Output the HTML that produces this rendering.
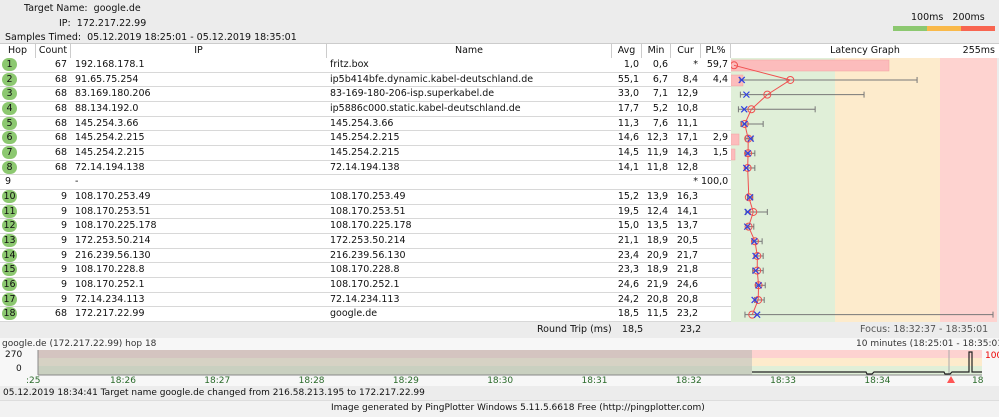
<!DOCTYPE html><html><head><style>
body{margin:0;width:999px;height:416px;background:#ececec;font-family:"DejaVu Sans","Liberation Sans",sans-serif;font-size:9.5px;color:#111;position:relative;overflow:hidden}
.a{position:absolute;white-space:nowrap}
.r{position:absolute;left:0;width:731px;height:14.67px;background:#fff;border-bottom:1px solid #d8d8d8;box-sizing:border-box}
.r div{position:absolute;top:1px;line-height:12px}
.h{position:absolute;top:44px;height:14px;background:#fff;border-right:1px solid #ccc;box-sizing:border-box;text-align:center;line-height:13px}
.b{background:#8cc870;border-radius:7px;min-width:13px;padding:0 1px;height:13px;top:0!important;line-height:13px!important;text-align:center;left:2px}
.rt{text-align:right}
</style></head><body>
<div class="a" style="left:24px;top:3px">Target Name:&nbsp; google.de</div>
<div class="a" style="left:59px;top:18px">IP:&nbsp; 172.217.22.99</div>
<div class="a" style="left:5px;top:32px">Samples Timed:&nbsp; 05.12.2019 18:25:01 - 05.12.2019 18:35:01</div>
<div class="a" style="left:911px;top:12px">100ms&nbsp;&nbsp; 200ms</div>
<div class="a" style="left:893px;top:26px;width:34px;height:5px;background:#8cc870"></div>
<div class="a" style="left:927px;top:26px;width:34px;height:5px;background:#f9b94a"></div>
<div class="a" style="left:961px;top:26px;width:34px;height:5px;background:#f86550"></div>
<div class="a" style="left:0;top:43px;width:999px;height:1px;background:#ccc"></div>
<div class="h" style="left:0;width:36px">Hop</div>
<div class="h" style="left:36px;width:35px">Count</div>
<div class="h" style="left:71px;width:256px">IP</div>
<div class="h" style="left:327px;width:285px">Name</div>
<div class="h" style="left:612px;width:30px">Avg</div>
<div class="h" style="left:642px;width:29px">Min</div>
<div class="h" style="left:671px;width:30px">Cur</div>
<div class="h" style="left:701px;width:30px">PL%</div>
<div class="h" style="left:731px;width:268px;border:0">Latency Graph<span style="position:absolute;right:4px">255ms</span></div>
<div id="rows"></div>
<svg class="a" style="left:731px;top:58px" width="268" height="264">
<rect x="0" y="0" width="104" height="264" fill="#e0efd8"/><rect x="104" y="0" width="105" height="264" fill="#fdebcc"/><rect x="209" y="0" width="57" height="264" fill="#fed3d0"/>
<g fill="#fcbcbc" stroke="#f4a0a0" stroke-width=".5"><rect x="0" y="2" width="158" height="11"/><rect x="0" y="17" width="12" height="11"/><rect x="0" y="76" width="8" height="11"/><rect x="0" y="91" width="4" height="11"/></g>
<g stroke="#777" stroke-width="1" id="eb"></g>
<polyline id="pl" fill="none" stroke="#f05050" stroke-width="1"/>
<g id="mk"></g>
</svg>
<div class="a" style="left:0;top:322px;width:999px;height:15px;background:#ececec"></div>
<div class="a" style="left:537px;top:324px">Round Trip (ms)</div>
<div class="a" style="left:622px;top:324px">18,5</div>
<div class="a" style="left:680px;top:324px">23,2</div>
<div class="a" style="left:860px;top:324px;color:#555">Focus: 18:32:37 - 18:35:01</div>
<div class="a" style="left:0;top:338px;width:999px;height:48px;background:#f7f7f7"></div>
<div class="a" style="left:2px;top:339px;font-size:9px;color:#333">google.de (172.217.22.99) hop 18</div>
<div class="a" style="left:856px;top:339px;font-size:9px;color:#333">10 minutes (18:25:01 - 18:35:01)</div>
<div class="a" style="left:5px;top:350px;font-size:9px">270</div><div class="a" style="left:16px;top:364px;font-size:9px">0</div>
<div class="a" style="left:985px;top:351px;font-size:9px;color:#e00">100</div>
<svg class="a" style="left:24px;top:350px" width="960" height="36">
<rect x="14" y="0" width="714" height="8" fill="#d4c4c0"/><rect x="14" y="8" width="714" height="8" fill="#d6d2c4"/><rect x="14" y="16" width="714" height="9" fill="#c9d0c0"/>
<rect x="728" y="0" width="230" height="8" fill="#fdd2d0"/><rect x="728" y="8" width="230" height="8" fill="#fdebcc"/><rect x="728" y="16" width="230" height="9" fill="#e0efd8"/>
<line x1="14" y1="0" x2="14" y2="25" stroke="#888"/><line x1="14" y1="25" x2="958" y2="25" stroke="#888"/>
<line x1="925" y1="0" x2="925" y2="25" stroke="#aaa"/>
<polyline points="728,22 842,22 843,24 848,24 850,22 920,22 921,24 926,24 928,22 940,22 942,22 945,22 945,2 948,2 948,22 958,22" fill="none" stroke="#222" stroke-width="1.2"/>
<polygon points="923,33 927,26 931,33" fill="#f55"/>
</svg>
<div class="a" style="left:26px;top:376px;font-size:9px;color:#2a6a2a;word-spacing:0">:25</div>
<div id="ax"></div>
<div class="a" style="left:0;top:386px;width:999px;height:14px;background:#ececec"></div>
<div class="a" style="left:3px;top:388px;font-size:9px">05.12.2019 18:34:41 Target name google.de changed from 216.58.213.195 to 172.217.22.99</div>
<div class="a" style="left:0;top:400px;width:999px;height:16px;background:#f2f2f2;border-top:1px solid #ddd"></div>
<div class="a" style="left:331px;top:403px;font-size:9px">Image generated by PingPlotter Windows 5.11.5.6618 Free (http://pingplotter.com)</div>
<script>
var D=[[1,67,"192.168.178.1","fritz.box","1,0","0,6","*","59,7",1,.6,null,null],
[2,68,"91.65.75.254","ip5b414bfe.dynamic.kabel-deutschland.de","55,1","6,7","8,4","4,4",55.1,6.7,8.4,177],
[3,68,"83.169.180.206","83-169-180-206-isp.superkabel.de","33,0","7,1","12,9","",33,7.1,12.9,126],
[4,68,"88.134.192.0","ip5886c000.static.kabel-deutschland.de","17,7","5,2","10,8","",17.7,5.2,10.8,79],
[5,68,"145.254.3.66","145.254.3.66","11,3","7,6","11,1","",11.3,7.6,11.1,29],
[6,68,"145.254.2.215","145.254.2.215","14,6","12,3","17,1","2,9",14.6,12.3,17.1,19],
[7,68,"145.254.2.215","145.254.2.215","14,5","11,9","14,3","1,5",14.5,11.9,14.3,21],
[8,68,"72.14.194.138","72.14.194.138","14,1","11,8","12,8","",14.1,11.8,12.8,21],
[9,"","-","","","","*","100,0",null],
[10,9,"108.170.253.49","108.170.253.49","15,2","13,9","16,3","",15.2,13.9,16.3,19],
[11,9,"108.170.253.51","108.170.253.51","19,5","12,4","14,1","",19.5,12.4,14.1,33],
[12,9,"108.170.225.178","108.170.225.178","15,0","13,5","13,7","",15,13.5,13.7,20],
[13,9,"172.253.50.214","172.253.50.214","21,1","18,9","20,5","",21.1,18.9,20.5,28],
[14,9,"216.239.56.130","216.239.56.130","23,4","20,9","21,7","",23.4,20.9,21.7,29],
[15,9,"108.170.228.8","108.170.228.8","23,3","18,9","21,8","",23.3,18.9,21.8,29],
[16,9,"108.170.252.1","108.170.252.1","24,6","21,9","24,6","",24.6,21.9,24.6,31],
[17,9,"72.14.234.113","72.14.234.113","24,2","20,8","20,8","",24.2,20.8,20.8,30],
[18,68,"172.217.22.99","google.de","18,5","11,5","23,2","",18.5,11.5,23.2,250]];
var h="",eb="",mk="",pts=[],X=function(v){return 2+v*1.04};
D.forEach(function(d,i){var t=58+i*14.667,c=t-58+7.3;
h+='<div class="r" style="top:'+t+'px">'+(d[0]==9?'<div style="left:5px">9</div>':'<div class="b">'+d[0]+'</div>')+
'<div class="rt" style="left:36px;width:31px">'+d[1]+'</div><div style="left:75px">'+d[2]+'</div><div style="left:330px">'+d[3]+
'</div><div class="rt" style="left:612px;width:27px">'+d[4]+'</div><div class="rt" style="left:642px;width:26px">'+d[5]+'</div><div class="rt" style="left:671px;width:27px">'+d[6]+'</div><div class="rt" style="left:701px;width:27px">'+d[7]+'</div></div>';
if(d[8]!=null){var a=X(d[8]);pts.push(a+","+c);
if(d[11]){eb+='<line x1="'+X(d[9])+'" y1="'+c+'" x2="'+X(d[11])+'" y2="'+c+'"/><line x1="'+X(d[9])+'" y1="'+(c-3)+'" x2="'+X(d[9])+'" y2="'+(c+3)+'"/><line x1="'+X(d[11])+'" y1="'+(c-3)+'" x2="'+X(d[11])+'" y2="'+(c+3)+'"/>';}
mk+='<circle cx="'+a+'" cy="'+c+'" r="3.5" fill="none" stroke="#f05050"/>';
if(d[10]!=null){var x=X(d[10]);mk+='<path d="M'+(x-3)+' '+(c-3)+'L'+(x+3)+' '+(c+3)+'M'+(x+3)+' '+(c-3)+'L'+(x-3)+' '+(c+3)+'" stroke="#3040e0" stroke-width="1.2"/>';}}});
document.getElementById("rows").innerHTML=h;document.getElementById("eb").innerHTML=eb;document.getElementById("mk").innerHTML=mk;
document.getElementById("pl").setAttribute("points",pts.join(" "));
var ax="",L=["18:26","18:27","18:28","18:29","18:30","18:31","18:32","18:33","18:34"];
L.forEach(function(s,i){ax+='<div class="a" style="left:'+(110+i*94.3)+'px;top:376px;font-size:9px;color:#2a6a2a">'+s+'</div>'});
ax+='<div class="a" style="left:972px;top:376px;font-size:9px;color:#2a6a2a">18</div>';
document.getElementById("ax").innerHTML=ax;
</script>
</body></html>
